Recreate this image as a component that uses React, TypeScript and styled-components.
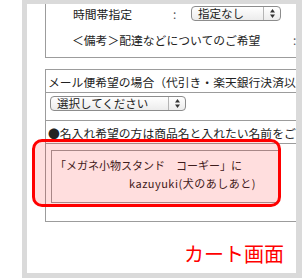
import React from "react";
import styled, { createGlobalStyle } from "styled-components";

const GlobalStyle = createGlobalStyle`
  html, body {
    margin: 0;
    padding: 0;
    background: #fff;
  }
  body {
    font-family: "Noto Sans CJK JP", "Noto Sans", sans-serif;
    color: #222;
  }
`;

const Page = styled.div`
  width: 302px;
  height: 278px;
  padding-left: 22px;
  box-sizing: border-box;
  background: #fff;
`;

const Frame = styled.div`
  height: 100%;
  padding: 4px 6px 5px 5px;
  box-sizing: border-box;
  background: #dadada;
`;

const Content = styled.div`
  position: relative;
  height: 100%;
  padding-left: 18px;
  box-sizing: border-box;
  background: #fff;
  overflow: hidden;
  display: flex;
  flex-direction: column;
`;

const Table = styled.div<{ $top?: boolean }>`
  width: 300px;
  flex-shrink: 0;
  display: flex;
  flex-direction: column;
  border-left: 1px solid #9c9c9c;
  border-top: ${({ $top }) => ($top ? "1px solid #9c9c9c" : "none")};
  box-sizing: border-box;
`;

const Row = styled.div<{ $h: number; $pad?: string; $align?: string }>`
  height: ${({ $h }) => $h}px;
  box-sizing: border-box;
  display: flex;
  align-items: ${({ $align }) => $align || "center"};
  padding: ${({ $pad }) => $pad || "0"};
  border-bottom: 1px solid #9c9c9c;
  font-size: 11.8px;
  white-space: nowrap;
  overflow: hidden;
`;

const PlainRow = styled(Row)`
  border-bottom: none;
`;

const Label = styled.span<{ $w: number }>`
  display: inline-block;
  flex-shrink: 0;
  width: ${({ $w }) => $w}px;
`;

const Colon = styled.span<{ $w: number }>`
  display: inline-block;
  flex-shrink: 0;
  width: ${({ $w }) => $w}px;
  color: #555;
`;

const SelectBox = styled.div<{ $w: number }>`
  width: ${({ $w }) => $w}px;
  height: 15px;
  flex-shrink: 0;
  box-sizing: border-box;
  display: flex;
  align-items: stretch;
  border: 1px solid #8c8c8c;
  border-radius: 4px;
  background: linear-gradient(#ffffff, #ececec);
  font-size: 11.5px;
  line-height: 13px;
`;

const SelectText = styled.span`
  flex: 1;
  padding-left: 6px;
  color: #222;
`;

const SelectArrow = styled.span`
  width: 16px;
  display: flex;
  align-items: center;
  justify-content: center;
  border-left: 1px solid #b5b5b5;
`;

const NoteBox = styled.div`
  width: 228px;
  height: 53px;
  box-sizing: border-box;
  border: 1px solid #9c9c9c;
  padding: 5px 0 0 3px;
  font-size: 11px;
  line-height: 18px;
  white-space: nowrap;
`;

const NoteLine = styled.div<{ $indent?: number; $spacing?: number }>`
  padding-left: ${({ $indent }) => $indent || 0}px;
  letter-spacing: ${({ $spacing }) => $spacing || 0}px;
`;

const Highlight = styled.div`
  position: absolute;
  left: 5px;
  top: 135px;
  width: 249px;
  height: 68px;
  box-sizing: border-box;
  border: 3px solid #ff0000;
  border-radius: 10px;
  background: rgba(255, 0, 0, 0.13);
`;

const Caption = styled.div`
  margin-top: 22px;
  padding-right: 12px;
  display: flex;
  justify-content: flex-end;
  color: #ff0000;
  font-size: 20px;
  line-height: 20px;
`;

function Arrows() {
  return (
    <svg width="5" height="9" viewBox="0 0 5 9">
      <path d="M2.5 0 L5 3.5 L0 3.5 Z" fill="#333" />
      <path d="M2.5 9 L5 5.5 L0 5.5 Z" fill="#333" />
    </svg>
  );
}

function Select({ width, label }: { width: number; label: string }) {
  return (
    <SelectBox $w={width}>
      <SelectText>{label}</SelectText>
      <SelectArrow>
        <Arrows />
      </SelectArrow>
    </SelectBox>
  );
}

export default function App() {
  return (
    <Page>
      <GlobalStyle />
      <Frame>
        <Content>
          <Table>
            <PlainRow $h={18} $pad="0 0 0 27px">
              <Label $w={100}>時間帯指定</Label>
              <Colon $w={18}>:</Colon>
              <Select width={90} label="指定なし" />
            </PlainRow>
            <Row $h={36} $pad="0 0 0 26px">
              <Label $w={221}>＜備考＞配達などについてのご希望</Label>
              <Colon $w={10}>:</Colon>
            </Row>
          </Table>

          <Table $top style={{ marginTop: 11 }}>
            <Row $h={23} $pad="0 0 0 2px">
              メール便希望の場合（代引き・楽天銀行決済以外）
            </Row>
            <Row $h={28} $pad="3px 0 0 4px" $align="flex-start">
              <Select width={136} label="選択してください" />
            </Row>
            <Row $h={23} $pad="0 0 0 2px">
              ●名入れ希望の方は商品名と入れたい名前をご記入ください
            </Row>
            <Row $h={78} $pad="6px 0 0 5px" $align="flex-start">
              <NoteBox>
                <NoteLine>「メガネ小物スタンド　コーギー」に</NoteLine>
                <NoteLine $indent={74} $spacing={0.5}>
                  kazuyuki(犬のあしあと)
                </NoteLine>
              </NoteBox>
            </Row>
          </Table>

          <Caption>カート画面</Caption>

          <Highlight />
        </Content>
      </Frame>
    </Page>
  );
}
